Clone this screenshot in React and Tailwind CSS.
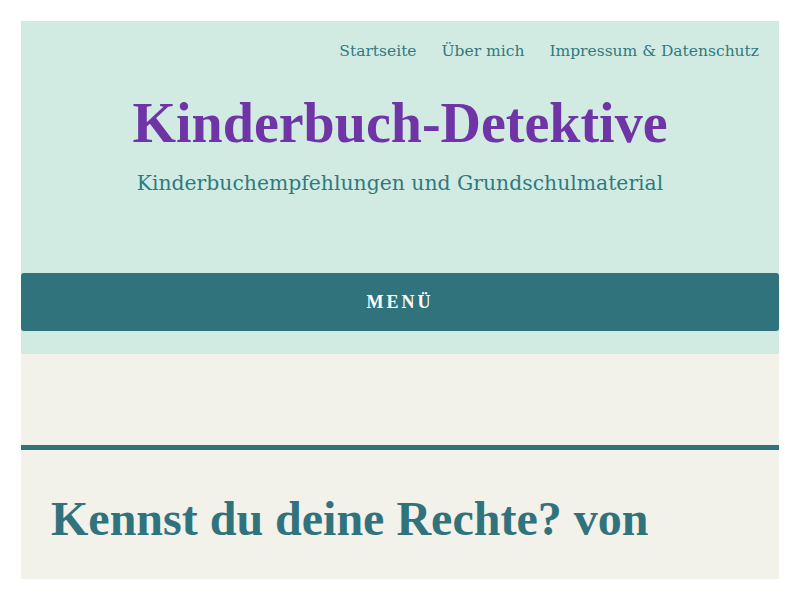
import React from 'react';

const navLinks = ['Startseite', 'Über mich', 'Impressum & Datenschutz'];

const App = () => {
  return (
    <div className="h-[600px] w-[800px] bg-white p-[21px]">
      <div className="flex h-full flex-col overflow-hidden bg-[#f2f1ea]">
        {/* Header */}
        <header className="shrink-0 bg-[#d2ebe2] pb-[23px]">
          <nav className="flex justify-end gap-[25px] pt-[18px] pr-[20px] font-['DejaVu_Serif',serif] text-[15.5px] leading-[24px] text-[#2e7a80]">
            {navLinks.map((link) => (
              <a key={link} href="#" className="whitespace-nowrap">
                {link}
              </a>
            ))}
          </nav>

          <div className="mt-[28px] text-center">
            <h1 className="font-['Liberation_Serif',serif] text-[56px] font-bold leading-[64px] text-[#6f35a6]">
              Kinderbuch-Detektive
            </h1>
            <p className="mt-[14px] font-['DejaVu_Serif',serif] text-[20.35px] leading-[28px] text-[#2e7a80]">
              Kinderbuchempfehlungen und Grundschulmaterial
            </p>
          </div>

          <button className="mt-[76px] flex h-[58px] w-full items-center justify-center rounded-[3px] bg-[#31737d] font-['Liberation_Serif',serif] text-[18px] font-bold tracking-[3px] text-white">
            MENÜ
          </button>
        </header>

        {/* Content */}
        <main className="flex-1">
          <div className="h-[91px]" />
          <div className="h-[5px] bg-[#31737d]" />
          <article className="px-[30px] pt-[26px]">
            <h2 className="font-['Liberation_Serif',serif] text-[48px] font-bold leading-[85px] text-[#31737d]">
              Kennst du deine Rechte? von Amnesty International
            </h2>
          </article>
        </main>
      </div>
    </div>
  );
};

export default App;
